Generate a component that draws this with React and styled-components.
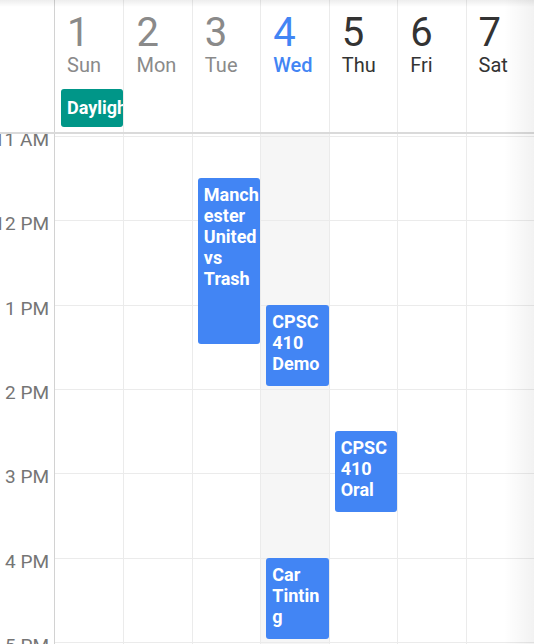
import React from "react";
import styled, { createGlobalStyle, css } from "styled-components";

const HOUR = 84.33;
const FIRST_HOUR = 11;

const days = [
	{ num: 1, name: "Sun", state: "past" },
	{ num: 2, name: "Mon", state: "past" },
	{ num: 3, name: "Tue", state: "past" },
	{ num: 4, name: "Wed", state: "today" },
	{ num: 5, name: "Thu", state: "future" },
	{ num: 6, name: "Fri", state: "future" },
	{ num: 7, name: "Sat", state: "future" },
];

const hours = ["11 AM", "12 PM", "1 PM", "2 PM", "3 PM", "4 PM", "5 PM"];

const allDay = [{ day: 0, title: "Daylight Saving Time starts" }];

const events = [
	{ day: 2, start: 11.5, end: 13.5, title: "Manchester United vs Trash" },
	{ day: 3, start: 13, end: 14, title: "CPSC 410 Demo" },
	{ day: 4, start: 14.5, end: 15.5, title: "CPSC 410 Oral" },
	{ day: 3, start: 16, end: 17, title: "Car Tinting" },
];

const GlobalStyle = createGlobalStyle`
	html, body {
		margin: 0;
		padding: 0;
		background: #fff;
		font-family: Roboto, "Noto Sans", sans-serif;
	}
`;

const dayColor = {
	past: "#8a8a8a",
	today: "#4285f4",
	future: "#333333",
};

const Calendar = styled.div`
	position: relative;
	height: 644px;
	display: flex;
	flex-direction: column;
	overflow: hidden;

	&::before {
		content: "";
		position: absolute;
		left: 0;
		right: 0;
		top: 0;
		height: 7px;
		background: linear-gradient(to bottom, rgba(0, 0, 0, 0.07), rgba(0, 0, 0, 0));
		z-index: 5;
		pointer-events: none;
	}

	&::after {
		content: "";
		position: absolute;
		top: 0;
		bottom: 0;
		right: 0;
		width: 30px;
		background: linear-gradient(to right, rgba(0, 0, 0, 0), rgba(0, 0, 0, 0.05));
		z-index: 5;
		pointer-events: none;
	}
`;

const Columns = styled.div`
	display: grid;
	grid-template-columns: 55px repeat(7, 1fr);
`;

const Header = styled(Columns)`
	height: 132px;
	border-bottom: 2px solid #dadada;
	flex-shrink: 0;
`;

const Gutter = styled.div`
	border-right: 1px solid #d2d2d2;
`;

const DayHead = styled.div`
	display: flex;
	flex-direction: column;
	padding-top: 13px;
	min-width: 0;
	${({ $first }) => !$first && css`border-left: 1px solid #ebebeb;`}
	color: ${({ $state }) => dayColor[$state]};
`;

const DayNum = styled.div`
	font-size: 40px;
	line-height: 40px;
	padding-left: 12px;
	font-weight: 400;
`;

const DayName = styled.div`
	font-size: 20px;
	line-height: 24px;
	padding-left: 12px;
	font-weight: ${({ $today }) => ($today ? 500 : 400)};
`;

const AllDaySlot = styled.div`
	margin-top: 12px;
	padding-left: 6px;
	height: 38px;
`;

const AllDayEvent = styled.div`
	height: 38px;
	box-sizing: border-box;
	background: #009688;
	border-radius: 3px;
	color: #fff;
	font-size: 18px;
	font-weight: 700;
	line-height: 38px;
	padding-left: 6px;
	white-space: nowrap;
	overflow: hidden;
`;

const Body = styled(Columns)`
	flex: 1;
	overflow: hidden;
`;

const TimeGutter = styled(Gutter)`
	padding-top: 2px;
`;

const TimeSlot = styled.div`
	position: relative;
	height: ${HOUR}px;
`;

const TimeLabel = styled.span`
	position: absolute;
	top: -7px;
	right: 5px;
	font-size: 19px;
	line-height: 22px;
	color: #757575;
	white-space: nowrap;
`;

const DayCol = styled.div`
	position: relative;
	padding-top: 2px;
	min-width: 0;
	background: ${({ $today }) => ($today ? "#f6f6f6" : "#fff")};
	${({ $first }) => !$first && css`border-left: 1px solid #ebebeb;`}
`;

const HourCell = styled.div`
	height: ${HOUR}px;
	box-sizing: border-box;
	border-top: 1px solid #ebebeb;
`;

const Event = styled.div`
	position: absolute;
	left: 5px;
	right: 0;
	box-sizing: border-box;
	background: ${({ $color }) => $color || "#4285f4"};
	border-radius: 3px;
	color: #fff;
	font-size: 18px;
	font-weight: 700;
	line-height: 21px;
	padding: 6px 1px 0 6px;
	overflow-wrap: anywhere;
	overflow: hidden;
`;

export default function App() {
	return (
		<>
			<GlobalStyle />
			<Calendar>
				<Header>
					<Gutter />
					{days.map((d, i) => (
						<DayHead key={d.num} $first={i === 0} $state={d.state}>
							<DayNum>{d.num}</DayNum>
							<DayName $today={d.state === "today"}>{d.name}</DayName>
							<AllDaySlot>
								{allDay
									.filter((e) => e.day === i)
									.map((e) => (
										<AllDayEvent key={e.title}>{e.title}</AllDayEvent>
									))}
							</AllDaySlot>
						</DayHead>
					))}
				</Header>
				<Body>
					<TimeGutter>
						{hours.map((h) => (
							<TimeSlot key={h}>
								<TimeLabel>{h}</TimeLabel>
							</TimeSlot>
						))}
					</TimeGutter>
					{days.map((d, i) => (
						<DayCol key={d.num} $first={i === 0} $today={d.state === "today"}>
							{hours.map((h) => (
								<HourCell key={h} />
							))}
							{events
								.filter((e) => e.day === i)
								.map((e) => (
									<Event
										key={e.title}
										style={{
											top: (e.start - FIRST_HOUR) * HOUR + 2,
											height: (e.end - e.start) * HOUR - 3,
										}}
									>
										{e.title}
									</Event>
								))}
						</DayCol>
					))}
				</Body>
			</Calendar>
		</>
	);
}
